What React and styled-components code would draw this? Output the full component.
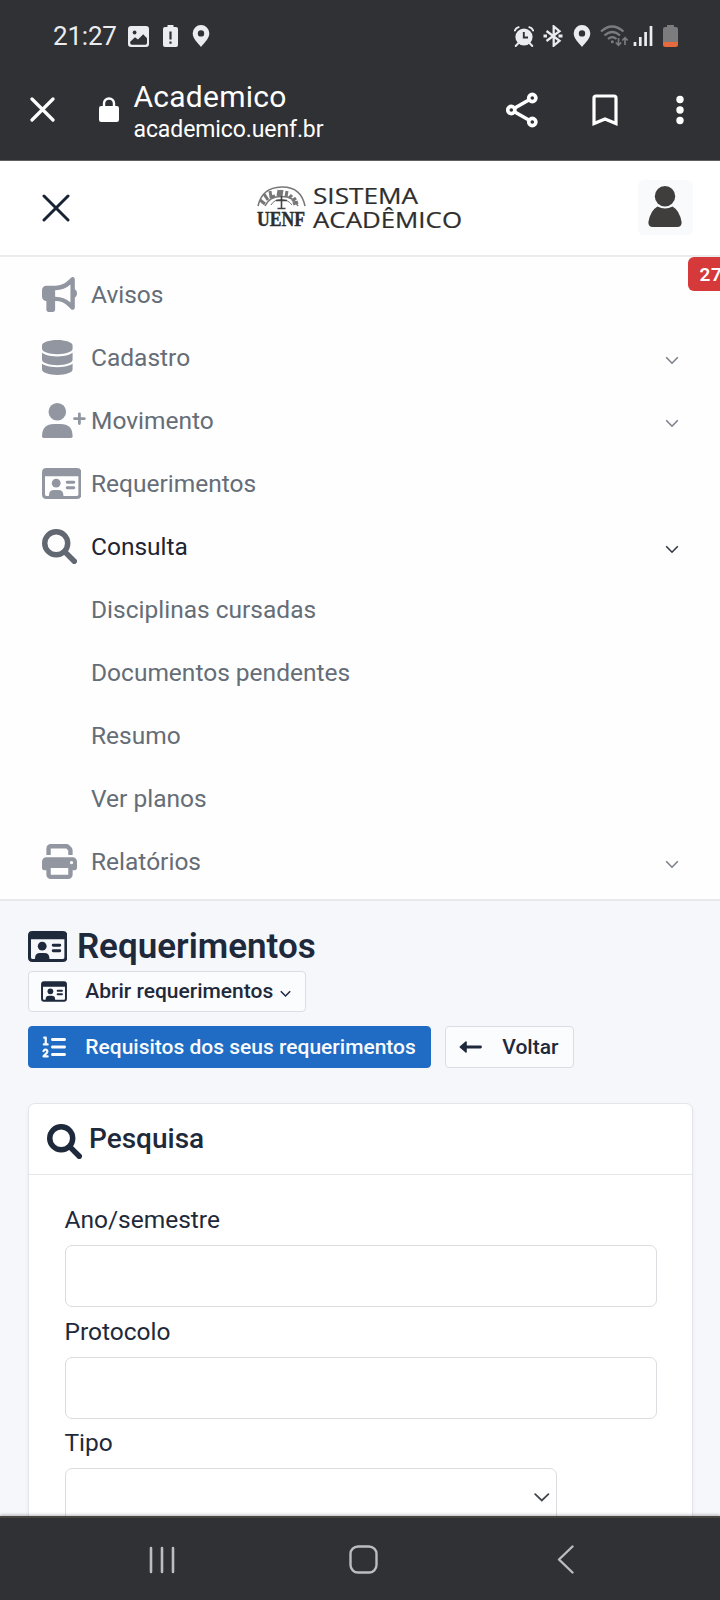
import React from "react";
import styled, { createGlobalStyle, css } from "styled-components";
import { FaBullhorn, FaDatabase, FaPrint, FaListOl } from "react-icons/fa6";

const GlobalStyle = createGlobalStyle`
  *, *::before, *::after { box-sizing: border-box; }
  body { margin: 0; background: #f5f7fb; }
  button, input, select { font: inherit; }
`;

const Screen = styled.div`
  display: flex;
  flex-direction: column;
  width: 720px;
  height: 1600px;
  overflow: hidden;
  background: #f5f7fb;
  color: #1e293b;
  font-family: Roboto, "Liberation Sans", sans-serif;
  font-size: 24.5px;
  line-height: 35px;
`;

const BrowserChrome = styled.header`
  flex: none;
  height: 161px;
  background: #303135;
  border-bottom: 1px solid #5f5e61;
  color: #fff;
`;

const StatusBar = styled.div`
  display: flex;
  justify-content: space-between;
  height: 72px;
  padding: 0 42.5px 0 53px;
  color: #ebecef;
`;

const StatusGroup = styled.div`
  display: flex;
  align-items: center;
  gap: ${(p) => p.$gap}px;
`;

const Clock = styled.span`
  width: 65px;
  margin-right: -2px;
  font-size: 26px;
  letter-spacing: -0.2px;
  white-space: nowrap;
`;

const AddressBar = styled.div`
  display: flex;
  align-items: center;
  height: 75px;
  padding: 0 36px 0 30px;
`;

const SiteLock = styled.span`
  display: flex;
  margin-left: 44px;
`;

const SiteInfo = styled.div`
  display: flex;
  flex-direction: column;
  flex: 1;
  margin-left: 14.5px;
  padding-top: 3px;
`;

const SiteTitle = styled.span`
  font-size: 30px;
  line-height: 36px;
  letter-spacing: 0.25px;
`;

const SiteHost = styled.span`
  font-size: 23px;
  line-height: 29px;
  letter-spacing: -0.1px;
`;

const BrowserActions = styled.div`
  display: flex;
  align-items: center;
  gap: 53px;
`;

const MoreMenu = styled.svg`
  margin-left: 5px;
`;

const TopBar = styled.div`
  flex: none;
  display: flex;
  align-items: center;
  justify-content: space-between;
  height: 96px;
  padding: 0 27px 0 42px;
  background: #fff;
  border-bottom: 2px solid #ebecee;
`;

const CloseMenu = styled.button`
  display: flex;
  padding: 0;
  border: 0;
  background: none;
  color: #182433;
`;

const Logo = styled.svg`
  margin: 0 0 3px 11px;
`;

const Avatar = styled.div`
  display: flex;
  justify-content: center;
  width: 55px;
  height: 55px;
  margin-bottom: 2px;
  padding: 6px 1px 0 0;
  border-radius: 6px;
  background: #f8fafc;
`;

const Menu = styled.nav`
  flex: none;
  position: relative;
  height: 644px;
  padding-top: 5.5px;
  background: #fefefe;
  border-bottom: 2px solid #e6e8ec;
`;

const MenuItem = styled.a`
  display: flex;
  align-items: center;
  height: 63px;
  padding: 0 41px 0 42px;
  color: ${(p) => (p.$active ? "#1e2433" : "#656d77")};
`;

const MenuIcon = styled.span`
  display: flex;
  width: 49px;
  color: ${(p) => (p.$active ? "#626872" : "#9196a0")};
  svg { flex: none; height: 35px; width: ${(p) => p.$glyph}px; }
`;

const MenuLabel = styled.span`
  flex: 1;
`;

const Caret = styled.svg`
  margin-top: 7.5px;
  color: ${(p) => (p.$active ? "#303846" : "#7b818a")};
`;

const Counter = styled.span`
  position: absolute;
  top: 0;
  left: 688px;
  width: 56px;
  height: 34px;
  padding: 1px 0 0 11.5px;
  border-radius: 6px;
  background: #d63939;
  color: #fff;
  font-size: 19px;
  font-weight: 600;
  line-height: 34px;
  letter-spacing: 0.6px;
`;

const Page = styled.main`
  flex: 1;
  min-height: 0;
  overflow: hidden;
  padding: 25px 27px 0 28px;
`;

const PageTitle = styled.h2`
  display: flex;
  align-items: center;
  gap: 9.5px;
  height: 42px;
  margin: 0 0 3px;
  font-size: 35px;
  font-weight: 600;
  line-height: 42px;
  svg { flex: none; height: 35px; width: 39.4px; margin-bottom: 2px; }
`;

const Actions = styled.div`
  display: flex;
  flex-wrap: wrap;
  gap: 14px;
`;

const Button = styled.button`
  display: flex;
  align-items: center;
  width: ${(p) => p.$width}px;
  height: ${(p) => p.$height || 42}px;
  padding: 0 0 0 12px;
  border: 1.5px solid #dadde3;
  border-radius: 4px;
  background: #fbfcfe;
  color: #1e293b;
  font-size: 21px;
  font-weight: 500;
  white-space: nowrap;
  ${(p) =>
    p.$primary &&
    css`
      border-color: #206bc4;
      background: #206bc4;
      color: #f8fafc;
    `}
`;

const ButtonIcon = styled.span`
  display: flex;
  align-items: center;
  width: 44.3px;
  padding-left: ${(p) => p.$inset || 0}px;
  svg { flex: none; width: ${(p) => p.$glyph}px; }
`;

const ButtonCaret = styled.svg`
  margin: 4px 0 0 7px;
`;

const Card = styled.section`
  height: 600px;
  margin-top: 35px;
  border: 1px solid #e3e5ea;
  border-radius: 7px;
  background: #fff;
  box-shadow: 0 2px 4px rgba(30, 41, 59, 0.05);
`;

const CardHeader = styled.div`
  display: flex;
  align-items: center;
  gap: 7px;
  height: 71px;
  padding-left: 18px;
  border-bottom: 1px solid #e4e6e9;
  svg { margin-top: 5px; }
`;

const CardTitle = styled.h3`
  margin: -2px 0 0;
  font-size: 28px;
  font-weight: 500;
  line-height: 35px;
`;

const Form = styled.form`
  display: flex;
  flex-direction: column;
  padding: 28px 35px 0 36px;
`;

const Field = styled.label`
  display: flex;
  flex-direction: column;
  height: 111.4px;
`;

const FieldName = styled.span`
  height: 35px;
  margin: -0.6px 0 7.9px -0.5px;
`;

const Input = styled.input`
  width: 100%;
  height: 62px;
  border: 1.5px solid #dbdcdf;
  border-radius: 7px;
  background: #fff;
`;

const SelectBox = styled.div`
  display: flex;
  justify-content: flex-end;
  width: 492px;
  height: 62px;
  padding: 24px 6px 0 0;
  border: 1.5px solid #dbdcdf;
  border-radius: 7px;
  background: #fff;
`;

const SystemNav = styled.footer`
  flex: none;
  position: relative;
  display: flex;
  align-items: center;
  height: 84px;
  padding: 1px 0 0 148px;
  border-top: 2px solid #48443f;
  background: #303135;
  box-shadow: 0 -1px 3px rgba(0, 0, 0, 0.28);
`;

const HomeKey = styled.svg`
  margin: 0 179px 0 173px;
`;

function Chevron({ active }) {
  return (
    <Caret $active={active} width="14" height="9" viewBox="0 0 14 9" fill="none" stroke="currentColor" strokeWidth="1.6">
      <path d="M1.2 1.2 7 7.2l5.8-6" />
    </Caret>
  );
}

function Cross({ size, width }) {
  return (
    <svg width={size} height={size} viewBox={`0 0 ${size} ${size}`} fill="none" stroke="currentColor" strokeWidth={width} strokeLinecap="round">
      <path d={`M2 2 ${size - 2} ${size - 2}M${size - 2} 2 2 ${size - 2}`} />
    </svg>
  );
}

function SearchIcon() {
  return (
    <svg width="35" height="35" viewBox="0 0 512 512" fill="none" stroke="currentColor" strokeWidth="80">
      <circle cx="208" cy="208" r="168" />
      <path d="M335 335 472 472" strokeLinecap="round" />
    </svg>
  );
}

function IdCardIcon({ height = 35 }) {
  return (
    <svg height={height} viewBox="0 0 39.4 35" fill="currentColor">
      <path fillRule="evenodd" d="M4.400 2H35q4.400 0 4.400 4.400v22.200Q39.400 33 35 33H4.400Q0 33 0 28.600V6.400Q0 2 4.400 2ZM3 10.200v18.400Q3 30 4.400 30H35q1.400 0 1.400-1.400V10.200Z" />
      <circle cx="14.2" cy="17.2" r="4.4" />
      <path d="M7 31v-1.800q0-5.200 5.200-5.200h4q5.200 0 5.200 5.200V31Z" />
      <path d="M25.200 16.300h6.600M25.200 21.700h6.600" stroke="currentColor" strokeWidth="2.900" strokeLinecap="round" />
    </svg>
  );
}

function PersonPlusIcon() {
  return (
    <svg viewBox="0 0 43.75 35" fill="currentColor">
      <circle cx="15.3" cy="8.8" r="8.8" />
      <path d="M0 33.300q0-12.300 12.200-12.300h6.200q12.200 0 12.200 12.300 0 1.700-1.700 1.700H1.700Q0 35 0 33.300Z" />
      <path d="M37.400 10.800v9.800M32.500 15.700h9.800" stroke="currentColor" strokeWidth="2.800" strokeLinecap="round" />
    </svg>
  );
}

function PinIcon() {
  return (
    <svg width="18" height="22" viewBox="0 0 18 22" fill="currentColor">
      <path fillRule="evenodd" d="M9 0a8.3 8.3 0 0 0-8.3 8.3C.7 13.5 5.5 17.6 9 22c3.500-4.400 8.300-8.500 8.300-13.700A8.300 8.300 0 0 0 9 0Zm0 5.200a3.200 3.200 0 1 1 0 6.400 3.200 3.200 0 0 1 0-6.400Z" />
    </svg>
  );
}

function LeftStatus() {
  return (
    <StatusGroup $gap={12.3}>
      <Clock>21:27</Clock>
      <svg width="21" height="21" viewBox="0 0 21 21">
        <rect width="21" height="21" rx="3" fill="currentColor" />
        <circle cx="6.6" cy="6.5" r="1.9" fill="#303135" />
        <path d="M2.200 15.800 7 11.200l3 2.300 5.200-5.200 3.800 4V17q0 1.700-1.700 1.700H4q-1.800 0-1.800-1.700Z" fill="#303135" />
      </svg>
      <svg width="18" height="22" viewBox="0.5 0 17 22">
        <path d="M5.500 0h6v2H14q2 0 2 2v16q0 2-2 2H3q-2 0-2-2V4q0-2 2-2h2.500Z" fill="currentColor" />
        <path d="M8.500 6.500v8M8.500 16.500v2.300" stroke="#303135" strokeWidth="2.2" />
      </svg>
      <PinIcon />
    </StatusGroup>
  );
}

function RightStatus() {
  return (
    <StatusGroup $gap={9.3}>
      <svg width="20" height="21" viewBox="0 0 20 21" fill="none" stroke="currentColor" strokeWidth="1.9">
        <circle cx="10" cy="11" r="8.6" fill="currentColor" stroke="none" />
        <path d="M.8 4.500Q2 2 4.700 1.200M19.200 4.500Q18 2 15.300 1.200M4.500 17l-2.800 3M15.500 17l2.800 3" strokeLinecap="round" />
        <path d="M9.800 6v5.500H14" stroke="#303135" />
      </svg>
      <svg width="20" height="22" viewBox="0 0 20 22" fill="none" stroke="currentColor" strokeWidth="2.3">
        <path d="m3.500 6 13 9.800-5.800 4.800V1.400l5.800 4.800L3.500 16" />
        <path d="M.5 11h3.500M15.500 11h4" strokeWidth="3" />
      </svg>
      <PinIcon />
      <svg width="28" height="22" viewBox="0 0 28 22" fill="none" stroke="#7b7b7e" strokeWidth="2.2">
        <path d="M1 6.500q11-10 22.500 0M4.500 10.500q7.800-7 15.500 0M8 14q4.300-3.800 8.500 0" />
        <circle cx="12.3" cy="16.8" r="1.5" fill="#7b7b7e" stroke="none" />
        <path d="M18.500 13v7M15.800 17.500l2.700 2.800 2.700-2.800M25 20v-7M22.300 15.500l2.700-2.800 2.700 2.800" strokeWidth="1.7" />
      </svg>
      <svg width="16" height="20" viewBox="4 0 16 20" fill="none" stroke="currentColor" strokeWidth="2.7" overflow="visible">
        <path d="M2 16v4M7.300 11v9M12.600 6v14M18 0v20" />
      </svg>
      <svg width="15" height="22" viewBox="0 0 15 22">
        <path d="M4 0h7v2h2q2 0 2 2v13H0V4q0-2 2-2h2Z" fill="#7c7b7d" />
        <path d="M0 17h15v2.500q0 2.500-2.500 2.500h-10Q0 22 0 19.500Z" fill="#e76a3f" />
      </svg>
    </StatusGroup>
  );
}

function UenfLogo() {
  return (
    <Logo width="208" height="60" viewBox="0 -5 208 60" fill="#2e2e2e">
      <g fill="none" stroke="#777">
        <path d="M2 24Q6 5.500 25.500 5T49 24" strokeWidth="1.6" />
        <path d="M9 24Q13 14.500 25.500 14.500T42 24" strokeWidth="1.5" />
        <path d="M15 23q3-5.500 10-5.500T36 23" strokeWidth="1" />
        <path d="m4 18 5 4m-1-10 4 6m2-9 1 6 4-1m4-6-1 6m4-6-1 6m6-5-1 6m6-2-3 3m7 0-4 3m6 1-5 2" strokeWidth="3" />
        <path d="M25.500 14v12M20 18.500h11M21.500 26.500h8" stroke="#444" strokeWidth="1.6" />
      </g>
      <text x="1" y="44" fontFamily="Liberation Serif, serif" fontSize="20" fontWeight="700" stroke="#2e2e2e" strokeWidth="0.4" textLength="48" lengthAdjust="spacingAndGlyphs">UENF</text>
      <text x="57" y="22" fontFamily="Open Sans, sans-serif" fontSize="21.5" stroke="#2e2e2e" strokeWidth="0.2" textLength="105" lengthAdjust="spacingAndGlyphs">SISTEMA</text>
      <text x="57" y="46.3" fontFamily="Open Sans, sans-serif" fontSize="21.5" stroke="#2e2e2e" strokeWidth="0.2" textLength="149" lengthAdjust="spacingAndGlyphs">ACADÊMICO</text>
    </Logo>
  );
}

const menu = [
  { label: "Avisos", Icon: FaBullhorn, glyph: 35 },
  { label: "Cadastro", Icon: FaDatabase, glyph: 30.6, caret: true },
  { label: "Movimento", Icon: PersonPlusIcon, glyph: 43.75, caret: true },
  { label: "Requerimentos", Icon: IdCardIcon, glyph: 39.4 },
  { label: "Consulta", Icon: SearchIcon, glyph: 35, caret: true, active: true },
  { label: "Disciplinas cursadas" },
  { label: "Documentos pendentes" },
  { label: "Resumo" },
  { label: "Ver planos" },
  { label: "Relatórios", Icon: FaPrint, glyph: 35, caret: true },
];

export default function App() {
  return (
    <Screen>
      <GlobalStyle />
      <BrowserChrome>
        <StatusBar>
          <LeftStatus />
          <RightStatus />
        </StatusBar>
        <AddressBar>
          <Cross size={25} width={3.2} />
          <SiteLock>
            <svg width="20" height="26" viewBox="0 0 20 26">
              <rect y="9" width="20" height="16" rx="2.2" fill="#fff" />
              <path d="M5 10V6.500a5 5 0 0 1 10 0V10" fill="none" stroke="#fff" strokeWidth="2.4" />
            </svg>
          </SiteLock>
          <SiteInfo>
            <SiteTitle>Academico</SiteTitle>
            <SiteHost>academico.uenf.br</SiteHost>
          </SiteInfo>
          <BrowserActions>
            <svg width="33" height="36" viewBox="0.700 0 33 36" fill="none" stroke="#fff" strokeWidth="3.6">
              <circle cx="6" cy="18" r="3.6" />
              <circle cx="27" cy="6" r="3.6" />
              <circle cx="27" cy="30" r="3.6" />
              <path d="m9.500 16 14-8M9.500 20l14 8" />
            </svg>
            <svg width="26" height="32" viewBox="0 0 26 32" fill="none" stroke="#fff" strokeWidth="3.2">
              <path d="M2 29.500V4q0-2 2-2h18q2 0 2 2v25.500L13 25Z" />
            </svg>
            <MoreMenu width="8" height="30" viewBox="0 0 8 30" fill="#fff">
              <circle cx="4" cy="4.5" r="3.7" />
              <circle cx="4" cy="15" r="3.7" />
              <circle cx="4" cy="25.5" r="3.7" />
            </MoreMenu>
          </BrowserActions>
        </AddressBar>
      </BrowserChrome>

      <TopBar>
        <CloseMenu aria-label="Fechar menu">
          <Cross size={28} width={3} />
        </CloseMenu>
        <UenfLogo />
        <Avatar>
          <svg width="34" height="41" viewBox="0 0 34 41" fill="#3f3e3d">
            <circle cx="17" cy="10.2" r="10.2" />
            <path d="M9.500 20.600q7.500 4 15 0Q31.500 24.500 33.600 36q.4 5-4.600 5H5q-5 0-4.600-5Q2.500 24.500 9.500 20.600Z" />
          </svg>
        </Avatar>
      </TopBar>

      <Menu>
        {menu.map(({ label, Icon, glyph, caret, active }) => (
          <MenuItem key={label} $active={active}>
            <MenuIcon $active={active} $glyph={glyph}>{Icon && <Icon />}</MenuIcon>
            <MenuLabel>{label}</MenuLabel>
            {caret && <Chevron active={active} />}
          </MenuItem>
        ))}
        <Counter>27</Counter>
      </Menu>

      <Page>
        <PageTitle>
          <IdCardIcon />
          Requerimentos
        </PageTitle>
        <Actions>
          <Button $width={278} $height={41}>
            <ButtonIcon $glyph={26}><IdCardIcon height={23} /></ButtonIcon>
            Abrir requerimentos
            <ButtonCaret width="11" height="8" viewBox="0 0 11 8" fill="none" stroke="currentColor" strokeWidth="1.5">
              <path d="m.8 1.200 4.700 4.800 4.700-4.800" />
            </ButtonCaret>
          </Button>
          <Button $width={403} $primary>
            <ButtonIcon $inset={1} $glyph={24}><FaListOl size={24} /></ButtonIcon>
            Requisitos dos seus requerimentos
          </Button>
          <Button $width={129}>
            <ButtonIcon $inset={1} $glyph={23}>
              <svg width="23" height="14" viewBox="0 0 23 14">
                <path d="M7 7h14.500" stroke="currentColor" strokeWidth="2.8" strokeLinecap="round" />
                <path d="M7 2v10L1.300 7Z" fill="currentColor" stroke="currentColor" strokeWidth="1.6" strokeLinejoin="round" />
              </svg>
            </ButtonIcon>
            Voltar
          </Button>
        </Actions>

        <Card>
          <CardHeader>
            <SearchIcon />
            <CardTitle>Pesquisa</CardTitle>
          </CardHeader>
          <Form>
            <Field>
              <FieldName>Ano/semestre</FieldName>
              <Input />
            </Field>
            <Field>
              <FieldName>Protocolo</FieldName>
              <Input />
            </Field>
            <Field>
              <FieldName>Tipo</FieldName>
              <SelectBox>
                <svg width="16" height="9" viewBox="0 0 16 9" fill="none" stroke="#42464d" strokeWidth="1.8" strokeLinecap="round">
                  <path d="m1.200 1.200 6.600 6.200 6.600-6.200" />
                </svg>
              </SelectBox>
            </Field>
          </Form>
        </Card>
      </Page>

      <SystemNav>
        <svg width="28" height="28" viewBox="0 0 28 28" stroke="#bdbdc0" strokeWidth="2.6" strokeLinecap="round">
          <path d="M3 2v24M14 2v24M25 2v24" />
        </svg>
        <HomeKey width="29" height="29" viewBox="0 0 29 29" fill="none" stroke="#bdbdc0" strokeWidth="2.4">
          <rect x="1.5" y="1.5" width="26" height="26" rx="7.5" />
        </HomeKey>
        <svg width="17" height="29" viewBox="0 0 17 29" fill="none" stroke="#bdbdc0" strokeWidth="2.4" strokeLinecap="round" strokeLinejoin="round">
          <path d="M15.500 1.500 2 14.500l13.500 13" />
        </svg>
      </SystemNav>
    </Screen>
  );
}
